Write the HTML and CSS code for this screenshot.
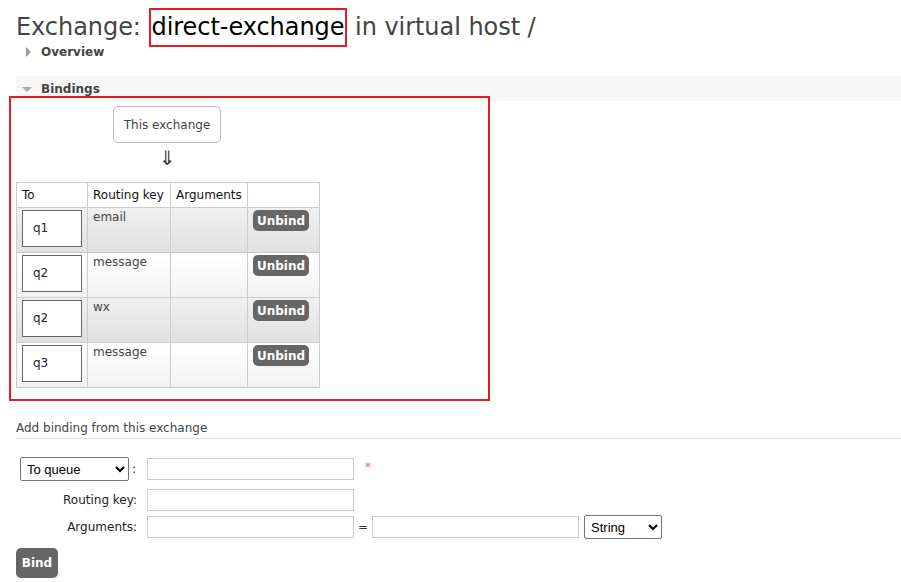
FILE: index.html
```html
<!DOCTYPE html>
<html>
<head>
<meta charset="utf-8">
<link rel="stylesheet" href="styles.css">
</head>
<body>
<h1 class="title">Exchange: <span class="hl">direct-exchange</span> in virtual host /</h1>
<div class="sec sec-closed"><span class="tri-right"></span>Overview</div>
<div class="sec sec-open"><span class="tri-down"></span>Bindings</div>
<div class="annot">
  <div class="source">
    <div class="this-ex">This exchange</div>
    <div class="arrow">&#8659;</div>
  </div>
  <table class="bindings">
    <thead>
      <tr><th class="c1">To</th><th class="c2">Routing key</th><th class="c3">Arguments</th><th class="c4"></th></tr>
    </thead>
    <tbody>
      <tr class="alt1"><td><span class="q">q1</span></td><td>email</td><td></td><td><button class="btn unbind">Unbind</button></td></tr>
      <tr class="alt2"><td><span class="q">q2</span></td><td>message</td><td></td><td><button class="btn unbind">Unbind</button></td></tr>
      <tr class="alt1"><td><span class="q">q2</span></td><td>wx</td><td></td><td><button class="btn unbind">Unbind</button></td></tr>
      <tr class="alt2"><td><span class="q">q3</span></td><td>message</td><td></td><td><button class="btn unbind">Unbind</button></td></tr>
    </tbody>
  </table>
</div>
<div class="add-title">Add binding from this exchange</div>
<div class="form">
  <div class="row row1">
    <div class="lbl"><select class="sel sel-q"><option>To queue</option></select><span class="colon">:</span></div>
    <input class="inp" type="text">
    <span class="req">*</span>
  </div>
  <div class="row row2">
    <div class="lbl">Routing key:</div>
    <input class="inp" type="text">
  </div>
  <div class="row row3">
    <div class="lbl">Arguments:</div>
    <input class="inp" type="text">
    <span class="eq">=</span>
    <input class="inp" type="text">
    <select class="sel sel-s"><option>String</option></select>
  </div>
</div>
<button class="btn bind">Bind</button>
</body>
</html>
```
FILE: styles.css
```css
html, body {
  margin: 0;
  padding: 0;
  background: #fff;
}
body {
  font-family: "DejaVu Sans", Verdana, sans-serif;
  font-size: 12px;
  color: #444;
}
.title {
  margin: 0;
  padding: 8px 0 0 16px;
  font-size: 24px;
  font-weight: normal;
  line-height: 39px;
  color: #444;
  white-space: nowrap;
  letter-spacing: -0.05px;
}
.hl {
  display: inline-block;
  border: 2px solid #e31b23;
  color: #000;
  padding: 0 1px;
  line-height: 35px;
}
.sec {
  font-weight: bold;
  color: #444;
  display: flex;
  align-items: center;
  font-size: 12px;
}
.sec-closed {
  margin-left: 26px;
  height: 10px;
}
.tri-right {
  width: 0;
  height: 0;
  border-top: 5px solid transparent;
  border-bottom: 5px solid transparent;
  border-left: 5px solid #999;
  margin-right: 10px;
}
.sec-open {
  margin: 19px 0 0 16px;
  height: 25px;
  background: #f7f7f7;
  padding-left: 6px;
  padding-top: 1px;
  box-sizing: border-box;
}
.tri-down {
  width: 0;
  height: 0;
  border-left: 5px solid transparent;
  border-right: 5px solid transparent;
  border-top: 5px solid #aaa;
  margin-right: 9px;
}
.annot {
  position: relative;
  margin: -5px 0 0 9px;
  width: 481px;
  border: 2px solid #e31b23;
  padding: 8px 0 12px 5px;
  box-sizing: border-box;
  height: 305px;
}
.source {
  display: inline-flex;
  flex-direction: column;
  align-items: center;
  margin-left: 97px;
}
.this-ex {
  border: 1px solid #bbb;
  border-radius: 5px;
  width: 108px;
  height: 37px;
  box-sizing: border-box;
  display: flex;
  align-items: center;
  justify-content: center;
  color: #444;
}
.arrow {
  font-size: 20px;
  line-height: 28px;
  color: #333;
  margin-top: 1px;
  margin-left: 1px;
}
.bindings {
  border-collapse: collapse;
  margin-top: 10px;
  color: #444;
}
.bindings th {
  font-weight: normal;
  color: #111;
  text-align: left;
  height: 24px;
  padding: 0 5px;
  border: 1px solid #ccc;
  background: #fff;
}
.bindings td {
  border: 1px solid #ccc;
  vertical-align: top;
  padding: 2px 5px 0 5px;
  height: 45px;
  box-sizing: border-box;
}
.c1 { width: 60px; }
.c2 { width: 72px; }
.c3 { width: 66px; }
.c4 { width: 61px; }
.alt1 { background: linear-gradient(#f0f0f0, #e0e0e0); }
.alt2 { background: linear-gradient(#ffffff, #f2f2f2); }
.q {
  display: block;
  width: 60px;
  height: 37px;
  box-sizing: border-box;
  border: 1px solid #666;
  background: #fff;
  padding-left: 10px;
  line-height: 35px;
  margin-top: 0;
  color: #223;
  font-size: 12px;
}
.btn {
  background: #666;
  color: #fff;
  border: none;
  font-family: "DejaVu Sans", Verdana, sans-serif;
  font-weight: bold;
  font-size: 12px;
  border-radius: 5px;
  padding: 0;
  cursor: pointer;
}
.unbind {
  width: 56px;
  height: 21px;
  margin-top: 0;
  display: block;
}
.add-title {
  margin: 20px 0 0 16px;
  padding-bottom: 3px;
  border-bottom: 1px solid #ddd;
  color: #444;
  line-height: 14px;
}
.form {
  margin: 18px 0 0 16px;
  display: flex;
  flex-direction: column;
}
.row {
  display: flex;
  align-items: center;
}
.lbl {
  width: 121px;
  text-align: right;
  color: #222;
  display: flex;
  justify-content: flex-end;
  align-items: center;
  margin-right: 10px;
}
.row1 { height: 24px; }
.row2 { height: 22px; margin-top: 8px; }
.row3 { height: 24px; margin-top: 4px; }
.sel {
  font-family: "Liberation Sans", Arial, sans-serif;
  font-size: 13px;
  height: 24px;
  border: 1px solid #767676;
  border-radius: 2px;
  background: #fff;
  color: #000;
  padding: 0 2px;
}
.sel-q { width: 109px; margin-right: 3px; }
.sel-s { width: 78px; margin-left: 5px; }
.colon { margin-right: 1px; }
.inp {
  width: 207px;
  height: 22px;
  box-sizing: border-box;
  border: 1px solid #ccc;
  margin: 0;
  padding: 0 2px;
}
.req {
  color: #f66;
  margin-left: 11px;
  margin-top: -4px;
  font-size: 12px;
}
.eq {
  margin: 0 4px 0 4px;
  color: #333;
}
.bind {
  display: block;
  margin: 9px 0 0 16px;
  width: 42px;
  height: 30px;
}
```
